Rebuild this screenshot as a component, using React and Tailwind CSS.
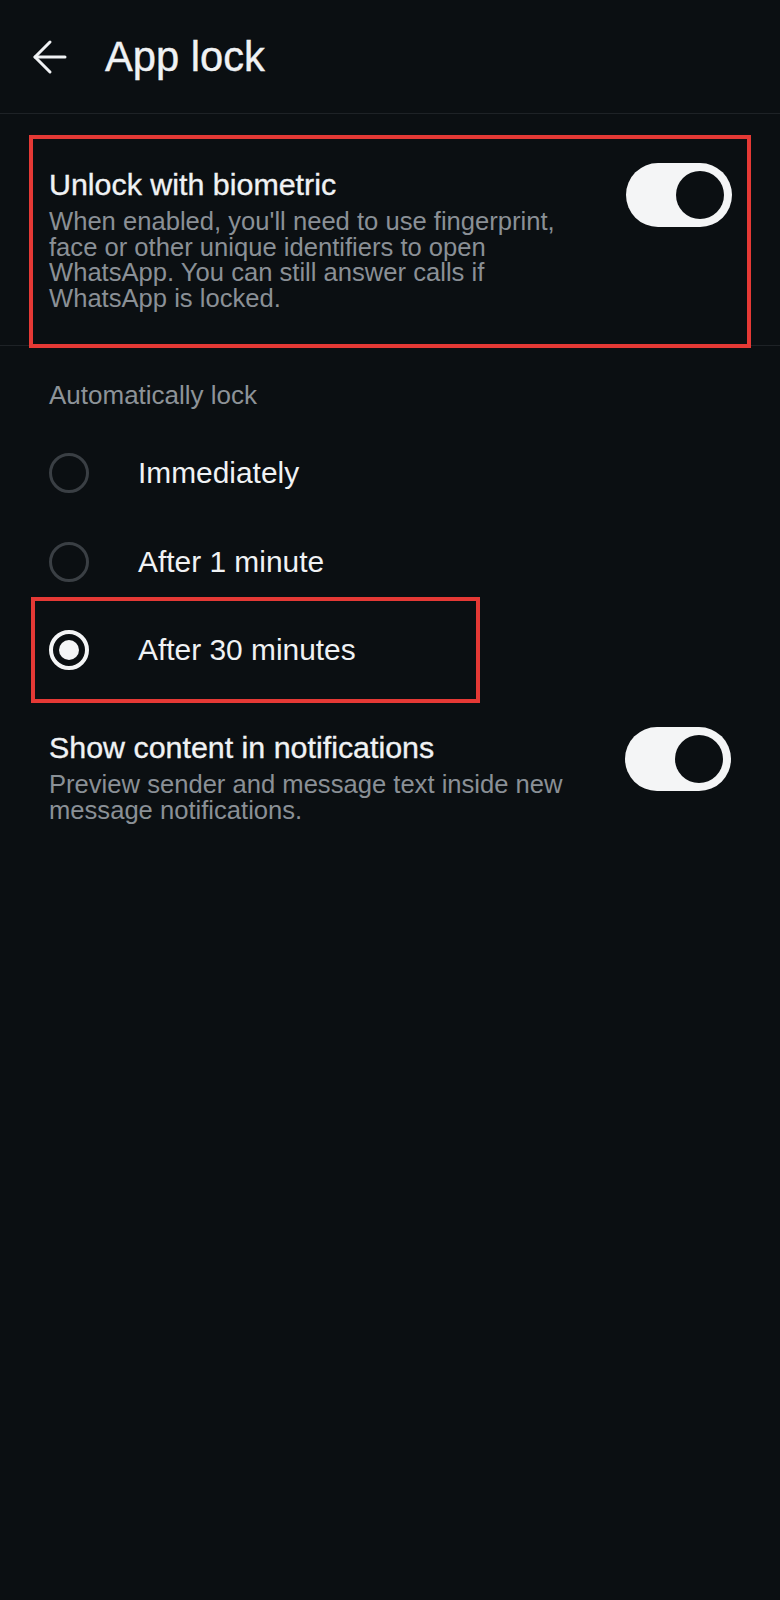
import React, { useState } from "react";

function BackArrow() {
    return (
        <svg
            width="36"
            height="36"
            viewBox="0 0 36 36"
            fill="none"
            stroke="currentColor"
            strokeWidth="3"
            strokeLinecap="round"
            strokeLinejoin="round"
        >
            <path d="M33 18H3" />
            <path d="M18 3L3 18l15 15" />
        </svg>
    );
}

function Toggle({ on, onClick }) {
    return (
        <button
            onClick={onClick}
            className={`flex h-[64px] w-[106px] shrink-0 items-center rounded-full bg-[#f4f5f6] px-[8px] ${
                on ? "justify-end" : "justify-start"
            }`}
        >
            <span className="h-[48px] w-[48px] rounded-full bg-[#0b0f12]" />
        </button>
    );
}

function Radio({ checked }) {
    if (checked) {
        return (
            <span className="flex h-10 w-10 shrink-0 items-center justify-center rounded-full border-4 border-[#f4f5f6]">
                <span className="h-5 w-5 rounded-full bg-[#f4f5f6]" />
            </span>
        );
    }
    return (
        <span className="h-10 w-10 shrink-0 rounded-full border-[3px] border-[#3a3f44]" />
    );
}

const options = [
    { id: "now", label: "Immediately" },
    { id: "1", label: "After 1 minute" },
    { id: "30", label: "After 30 minutes" },
];

export default function App() {
    const [biometric, setBiometric] = useState(true);
    const [preview, setPreview] = useState(true);
    const [lockAfter, setLockAfter] = useState("30");

    return (
        <div className="min-h-[1600px] bg-[#0b0f12] font-['Liberation_Sans',Arial,sans-serif] text-[#f0f2f4]">
            <header className="flex h-[114px] items-center border-b border-[#1e2226] pl-[32px]">
                <BackArrow />
                <h1 className="ml-[37px] text-[41.7px] leading-[41px] [-webkit-text-stroke:0.4px_currentColor]">
                    App lock
                </h1>
            </header>

            {/* biometric */}
            <div className="relative mx-[29px] mt-[21px] border-4 border-[#e53935] pb-[33px] pl-[16px] pr-[15px] pt-[24px]">
                <div className="flex items-start justify-between">
                    <div className="pt-[4px]">
                        <h2 className="text-[30.4px] leading-[34px] [-webkit-text-stroke:0.35px_currentColor]">
                            Unlock with biometric
                        </h2>
                        <p className="mt-[8px] max-w-[535px] text-[25.6px] leading-[25.5px] text-[#8a9096]">
                            When enabled, you'll need to use fingerprint,
                            face or other unique identifiers to open
                            WhatsApp. You can still answer calls if
                            WhatsApp is locked.
                        </p>
                    </div>
                    <Toggle on={biometric} onClick={() => setBiometric(!biometric)} />
                </div>
            </div>
            <div className="-mt-[3px] h-px bg-[#1e2226]" />

            <div className="mt-[34px] pl-[49px] text-[26px] leading-[30px] text-[#8d9398]">
                Automatically lock
            </div>

            <div className="mt-[18px]">
                {options.map((opt) =>
                    opt.id === "30" ? (
                        <button
                            key={opt.id}
                            onClick={() => setLockAfter(opt.id)}
                            className="-mt-[9px] ml-[31px] flex h-[106px] w-[449px] items-center border-4 border-[#e53935] pl-[14px] text-left"
                        >
                            <Radio checked={lockAfter === opt.id} />
                            <span className="ml-[49px] text-[29.9px] leading-[34px]">
                                {opt.label}
                            </span>
                        </button>
                    ) : (
                        <button
                            key={opt.id}
                            onClick={() => setLockAfter(opt.id)}
                            className="flex h-[89px] w-full items-center pl-[49px] text-left"
                        >
                            <Radio checked={lockAfter === opt.id} />
                            <span className="ml-[49px] text-[29.9px] leading-[34px]">
                                {opt.label}
                            </span>
                        </button>
                    )
                )}
            </div>

            {/* notifications */}
            <div className="mt-[24px] flex items-start justify-between pl-[49px] pr-[49px]">
                <div className="pt-[3px]">
                    <h2 className="text-[30.4px] leading-[34px] [-webkit-text-stroke:0.35px_currentColor]">
                        Show content in notifications
                    </h2>
                    <p className="mt-[8px] max-w-[535px] text-[25.6px] leading-[25.5px] text-[#8a9096]">
                        Preview sender and message text inside new
                        message notifications.
                    </p>
                </div>
                <Toggle on={preview} onClick={() => setPreview(!preview)} />
            </div>
        </div>
    );
}
